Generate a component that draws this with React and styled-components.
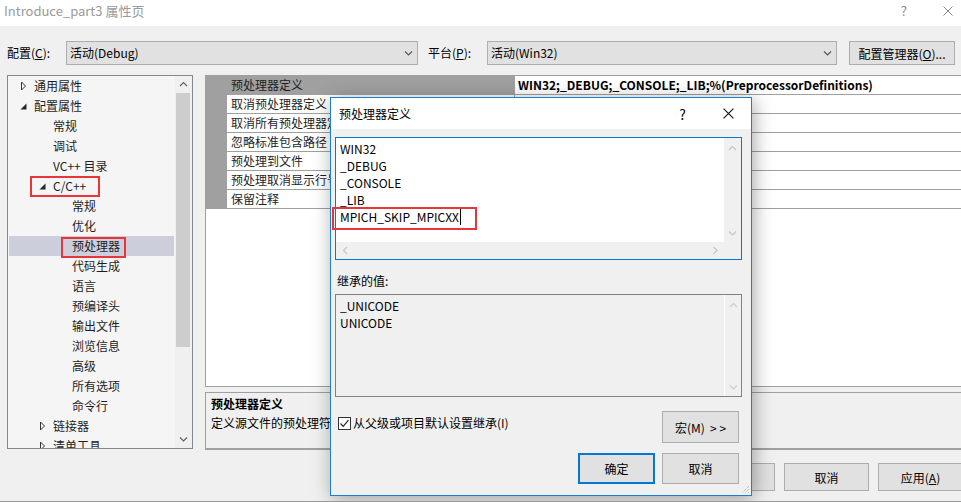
import React from "react";
import styled, { createGlobalStyle } from "styled-components";

const FONT = `"Noto Sans CJK SC", "Liberation Sans", sans-serif`;

const GlobalStyle = createGlobalStyle`
  html, body { margin: 0; padding: 0; background: #f0f0f0; }
  body { font-family: ${FONT}; font-size: 12px; color: #000; }
  * { box-sizing: border-box; }
`;

const tree = [
  { label: "通用属性", level: 0, arrow: "closed" },
  { label: "配置属性", level: 0, arrow: "open" },
  { label: "常规", level: 1 },
  { label: "调试", level: 1 },
  { label: "VC++ 目录", level: 1 },
  { label: "C/C++", level: 1, arrow: "open", mark: { left: 21, width: 70, top: 0 } },
  { label: "常规", level: 2 },
  { label: "优化", level: 2 },
  { label: "预处理器", level: 2, selected: true, mark: { left: 52, width: 65, top: 1 } },
  { label: "代码生成", level: 2 },
  { label: "语言", level: 2 },
  { label: "预编译头", level: 2 },
  { label: "输出文件", level: 2 },
  { label: "浏览信息", level: 2 },
  { label: "高级", level: 2 },
  { label: "所有选项", level: 2 },
  { label: "命令行", level: 2 },
  { label: "链接器", level: 1, arrow: "closed" },
  { label: "清单工具", level: 1, arrow: "closed" },
];

const props = [
  { name: "预处理器定义", value: "WIN32;_DEBUG;_CONSOLE;_LIB;%(PreprocessorDefinitions)", selected: true },
  { name: "取消预处理器定义" },
  { name: "取消所有预处理器定义" },
  { name: "忽略标准包含路径" },
  { name: "预处理到文件" },
  { name: "预处理取消显示行号" },
  { name: "保留注释" },
];

const defines = ["WIN32", "_DEBUG", "_CONSOLE", "_LIB", "MPICH_SKIP_MPICXX"];
const inherited = ["_UNICODE", "UNICODE"];

// ---------- icons ----------

const Chevron = ({ dir = "down", color = "#444" }) => {
  const paths = {
    down: "M1 1.5 L4.5 5 L8 1.5",
    up: "M1 5 L4.5 1.5 L8 5",
    left: "M5 1 L1.5 4.5 L5 8",
    right: "M1.5 1 L5 4.5 L1.5 8",
  };
  const vertical = dir === "up" || dir === "down";
  return (
    <svg width={vertical ? 9 : 7} height={vertical ? 7 : 9} viewBox={vertical ? "0 0 9 7" : "0 0 7 9"}>
      <path d={paths[dir]} fill="none" stroke={color} strokeWidth="1.1" />
    </svg>
  );
};

const TreeArrow = ({ kind }) =>
  kind === "open" ? (
    <svg width="7" height="7" viewBox="0 0 7 7">
      <path d="M6.5 0.5 L6.5 6.5 L0.5 6.5 Z" fill="#262626" />
    </svg>
  ) : (
    <svg width="7" height="10" viewBox="0 0 7 10">
      <path d="M1.5 1 L5.5 5 L1.5 9 Z" fill="none" stroke="#333" strokeWidth="1" />
    </svg>
  );

const CloseGlyph = ({ size = 10 }) => (
  <svg width={size} height={size} viewBox="0 0 10 10">
    <path d="M0.5 0.5 L9.5 9.5 M9.5 0.5 L0.5 9.5" stroke="#111" strokeWidth="1" />
  </svg>
);

const CheckMark = () => (
  <svg width="11" height="11" viewBox="0 0 11 11">
    <path d="M1.5 5.5 L4.2 8.3 L9.5 2.2" fill="none" stroke="#222" strokeWidth="1.2" />
  </svg>
);

const Grip = () => (
  <svg width="9" height="9" viewBox="0 0 9 9">
    <path d="M8 1 L1 8 M8 4 L4 8 M8 7 L7 8" stroke="#a8a8a8" strokeWidth="1" strokeDasharray="1 1" />
  </svg>
);

// ---------- main window ----------

const Window = styled.div`
  position: relative;
  width: 961px;
  height: 502px;
  overflow: hidden;
  background: #f0f0f0;
  border-bottom: 1px solid #9a9a9a;
  display: flex;
  flex-direction: column;
`;

const TitleBar = styled.div`
  height: 26px;
  flex-shrink: 0;
  background: #fff;
  display: flex;
  align-items: flex-start;
  padding: 2px 8px 0 4px;
  color: #9a9a9a;
  font-size: 13px;
  line-height: 18px;
`;

const TitleControls = styled.div`
  margin-left: auto;
  display: flex;
  align-items: center;
  gap: 36px;
  height: 18px;
  color: #8a8a8a;
  svg path { stroke: #8a8a8a; }
`;

const ConfigRow = styled.div`
  margin-top: 15px;
  height: 24px;
  flex-shrink: 0;
  display: flex;
  align-items: center;
  padding-left: 7px;
`;

const FieldLabel = styled.div`
  width: ${(p) => p.$w}px;
  line-height: 24px;
  flex-shrink: 0;
`;

const Combo = styled.div`
  width: ${(p) => p.$w}px;
  height: 24px;
  flex-shrink: 0;
  background: #e1e1e1;
  border: 1px solid #adadad;
  display: flex;
  align-items: center;
  justify-content: space-between;
  padding: 0 4px 0 3px;
  line-height: 22px;
`;

const Button = styled.div`
  width: ${(p) => p.$w}px;
  height: ${(p) => p.$h || 24}px;
  flex-shrink: 0;
  background: #e1e1e1;
  border: ${(p) => (p.$primary ? "2px solid #0078d7" : "1px solid #adadad")};
  display: flex;
  align-items: center;
  justify-content: center;
  margin-left: ${(p) => p.$ml || 0}px;
`;

const Main = styled.div`
  margin-top: 10px;
  height: 375px;
  flex-shrink: 0;
  display: flex;
  gap: 12px;
  padding-left: 7px;
`;

const Tree = styled.div`
  width: 186px;
  height: 374px;
  flex-shrink: 0;
  border: 1px solid #828790;
  background: #f5f5f5;
  display: flex;
`;

const TreeList = styled.div`
  flex: 1;
  overflow: hidden;
`;

const TreeRow = styled.div`
  position: relative;
  height: 20px;
  display: flex;
  align-items: center;
  padding-left: ${(p) => p.$level * 19 + 9}px;
  margin: 0 1px;
  background: ${(p) => (p.$selected ? "#cccedb" : "transparent")};
  line-height: 20px;
  color: #1e1e1e;
`;

const ArrowSlot = styled.span`
  width: 16px;
  flex-shrink: 0;
  display: flex;
  align-items: center;
  padding-left: 2px;
`;

const RedBox = styled.div`
  position: absolute;
  left: ${(p) => p.$left}px;
  top: ${(p) => p.$top}px;
  width: ${(p) => p.$width}px;
  height: ${(p) => p.$height || 21}px;
  border: 2px solid #e8353a;
  pointer-events: none;
`;

const ScrollV = styled.div`
  width: 17px;
  flex-shrink: 0;
  background: ${(p) => p.$bg || "#f0f0f0"};
  border-left: ${(p) => (p.$divider ? "1px solid #fff" : "none")};
  display: flex;
  flex-direction: column;
`;

const ArrowCell = styled.div`
  height: 17px;
  flex-shrink: 0;
  display: flex;
  align-items: center;
  justify-content: center;
  margin-top: ${(p) => (p.$bottom ? "auto" : "0")};
`;

const Thumb = styled.div`
  height: ${(p) => p.$h}px;
  margin: 0 2px 0 1px;
  background: #cdcdcd;
`;

const RightCol = styled.div`
  width: 760px;
  flex-shrink: 0;
  display: flex;
  flex-direction: column;
  gap: 5px;
`;

const Grid = styled.div`
  height: 312px;
  border: 1px solid #a0a0a0;
  background: #fff;
`;

const GridRow = styled.div`
  display: flex;
  height: ${(p) => (p.$first ? 19 : 19)}px;
  line-height: 18px;
`;

const GridMargin = styled.div`
  width: 21px;
  flex-shrink: 0;
  background: #a0a0a0;
`;

const NameCell = styled.div`
  width: 288px;
  flex-shrink: 0;
  padding-left: 4px;
  background: ${(p) => (p.$selected ? "#a0a0a0" : "#fff")};
  border-bottom: 1px solid #a0a0a0;
  border-right: 1px solid #a0a0a0;
  white-space: nowrap;
  overflow: hidden;
  color: #1e1e1e;
`;

const ValueCell = styled.div`
  flex: 1;
  padding-left: 3px;
  border-bottom: 1px solid #a0a0a0;
  font-weight: ${(p) => (p.$bold ? 700 : 400)};
  white-space: nowrap;
`;

const Desc = styled.div`
  height: 58px;
  border: 1px solid #a0a0a0;
  border-bottom-width: 2px;
  padding: 1px 5px;
  line-height: 19px;
`;

const DescTitle = styled.div`
  font-weight: 700;
`;

const Footer = styled.div`
  margin-top: 13px;
  display: flex;
  justify-content: flex-end;
  gap: 9px;
  margin-right: -2px;
`;

// ---------- dialog ----------

const Dialog = styled.div`
  position: absolute;
  left: 330px;
  top: 97px;
  width: 422px;
  height: 399px;
  border: 1px solid #1a7fd4;
  background: #f0f0f0;
  box-shadow: 2px 3px 18px rgba(0, 0, 0, 0.35);
  display: flex;
  flex-direction: column;
`;

const DialogTitle = styled.div`
  height: 31px;
  flex-shrink: 0;
  background: #fff;
  display: flex;
  align-items: center;
  padding: 0 17px 0 8px;
`;

const DialogControls = styled.div`
  margin-left: auto;
  display: flex;
  align-items: center;
  gap: 37px;
  font-size: 14px;
`;

const DialogBody = styled.div`
  flex: 1;
  display: flex;
  flex-direction: column;
  padding: 8px 9px 0 4px;
`;

const EditBox = styled.div`
  height: 123px;
  border: 1px solid #0078d7;
  background: #fff;
  display: grid;
  grid-template-columns: 1fr 17px;
  grid-template-rows: 1fr 17px;
`;

const EditText = styled.div`
  position: relative;
  padding: 2px 4px;
  line-height: 17px;
`;

const Caret = styled.span`
  display: inline-block;
  width: 1px;
  height: 17px;
  background: #000;
  vertical-align: top;
  margin-left: 1px;
`;

const ScrollH = styled.div`
  background: #f0f0f0;
  display: flex;
  align-items: center;
  justify-content: space-between;
  padding: 0 5px 0 6px;
`;

const Corner = styled.div`
  background: #f0f0f0;
`;

const SectionLabel = styled.div`
  margin-top: 12px;
  line-height: 18px;
  padding-left: 2px;
`;

const InheritBox = styled.div`
  margin-top: 4px;
  height: 103px;
  border: 1px solid #828282;
  display: flex;
`;

const InheritText = styled.div`
  flex: 1;
  padding: 2px 4px;
  line-height: 17px;
`;

const OptionRow = styled.div`
  margin-top: 14px;
  display: flex;
  align-items: flex-start;
  justify-content: space-between;
  padding-right: 3px;
`;

const CheckLabel = styled.label`
  margin-top: 3px;
  margin-left: 3px;
  display: flex;
  align-items: center;
  gap: 2px;
  line-height: 18px;
`;

const CheckBox = styled.span`
  width: 13px;
  height: 13px;
  border: 1px solid #333;
  background: #fff;
  display: flex;
  align-items: center;
  justify-content: center;
`;

const DialogFooter = styled.div`
  margin-top: 10px;
  display: flex;
  justify-content: flex-end;
  gap: 7px;
  padding-right: 3px;
`;

const GripCorner = styled.div`
  position: absolute;
  right: 1px;
  bottom: 1px;
  display: flex;
`;

export default function App() {
  return (
    <>
      <GlobalStyle />
      <Window>
        <TitleBar>
          <span>Introduce_part3 属性页</span>
          <TitleControls>
            <span>?</span>
            <CloseGlyph />
          </TitleControls>
        </TitleBar>

        <ConfigRow>
          <FieldLabel $w={59}>配置(<u>C</u>):</FieldLabel>
          <Combo $w={352}>
            活动(Debug)
            <Chevron dir="down" color="#555" />
          </Combo>
          <FieldLabel $w={59} style={{ marginLeft: 10 }}>平台(<u>P</u>):</FieldLabel>
          <Combo $w={350}>
            活动(Win32)
            <Chevron dir="down" color="#555" />
          </Combo>
          <Button $w={106} $ml={12}>配置管理器(<u>O</u>)...</Button>
        </ConfigRow>

        <Main>
          <Tree>
            <TreeList>
              {tree.map((item, i) => (
                <TreeRow key={i} $level={item.level} $selected={item.selected}>
                  <ArrowSlot>{item.arrow && <TreeArrow kind={item.arrow} />}</ArrowSlot>
                  <span>{item.label}</span>
                  {item.mark && <RedBox $left={item.mark.left} $top={item.mark.top} $width={item.mark.width} />}
                </TreeRow>
              ))}
            </TreeList>
            <ScrollV>
              <ArrowCell><Chevron dir="up" color="#606060" /></ArrowCell>
              <Thumb $h={254} />
              <ArrowCell $bottom><Chevron dir="down" color="#606060" /></ArrowCell>
            </ScrollV>
          </Tree>

          <RightCol>
            <Grid>
              {props.map((p, i) => (
                <GridRow key={i} $first={i === 0}>
                  <GridMargin />
                  <NameCell $selected={p.selected}>{p.name}</NameCell>
                  <ValueCell $bold={p.selected}>{p.value}</ValueCell>
                </GridRow>
              ))}
            </Grid>
            <Desc>
              <DescTitle>预处理器定义</DescTitle>
              <div>定义源文件的预处理符号。</div>
            </Desc>
          </RightCol>
        </Main>

        <Footer>
          <Button $w={85} $h={28}>确定</Button>
          <Button $w={85} $h={28}>取消</Button>
          <Button $w={85} $h={28}>应用(<u>A</u>)</Button>
        </Footer>

        <Dialog>
          <DialogTitle>
            预处理器定义
            <DialogControls>
              <span>?</span>
              <CloseGlyph size={11} />
            </DialogControls>
          </DialogTitle>
          <DialogBody>
            <EditBox>
              <EditText>
                {defines.map((d, i) => (
                  <div key={d}>
                    {d}
                    {i === defines.length - 1 && <Caret />}
                  </div>
                ))}
                <RedBox $left={-4} $top={69} $width={145} $height={23} />
              </EditText>
              <ScrollV>
                <ArrowCell style={{ marginTop: 2 }}><Chevron dir="up" color="#c4c4c4" /></ArrowCell>
                <ArrowCell $bottom><Chevron dir="down" color="#c4c4c4" /></ArrowCell>
              </ScrollV>
              <ScrollH>
                <Chevron dir="left" color="#c4c4c4" />
                <Chevron dir="right" color="#c4c4c4" />
              </ScrollH>
              <Corner />
            </EditBox>

            <SectionLabel>继承的值:</SectionLabel>
            <InheritBox>
              <InheritText>
                {inherited.map((d) => (
                  <div key={d}>{d}</div>
                ))}
              </InheritText>
              <ScrollV $divider>
                <ArrowCell style={{ marginTop: 2 }}><Chevron dir="up" color="#cdcdcd" /></ArrowCell>
                <ArrowCell $bottom><Chevron dir="down" color="#cdcdcd" /></ArrowCell>
              </ScrollV>
            </InheritBox>

            <OptionRow>
              <CheckLabel>
                <CheckBox><CheckMark /></CheckBox>
                从父级或项目默认设置继承(I)
              </CheckLabel>
              <Button $w={77} $h={32}>宏(M)&nbsp;&nbsp;&gt; &gt;</Button>
            </OptionRow>

            <DialogFooter>
              <Button $w={77} $h={31} $primary>确定</Button>
              <Button $w={77} $h={31}>取消</Button>
            </DialogFooter>
          </DialogBody>
          <GripCorner><Grip /></GripCorner>
        </Dialog>
      </Window>
    </>
  );
}
